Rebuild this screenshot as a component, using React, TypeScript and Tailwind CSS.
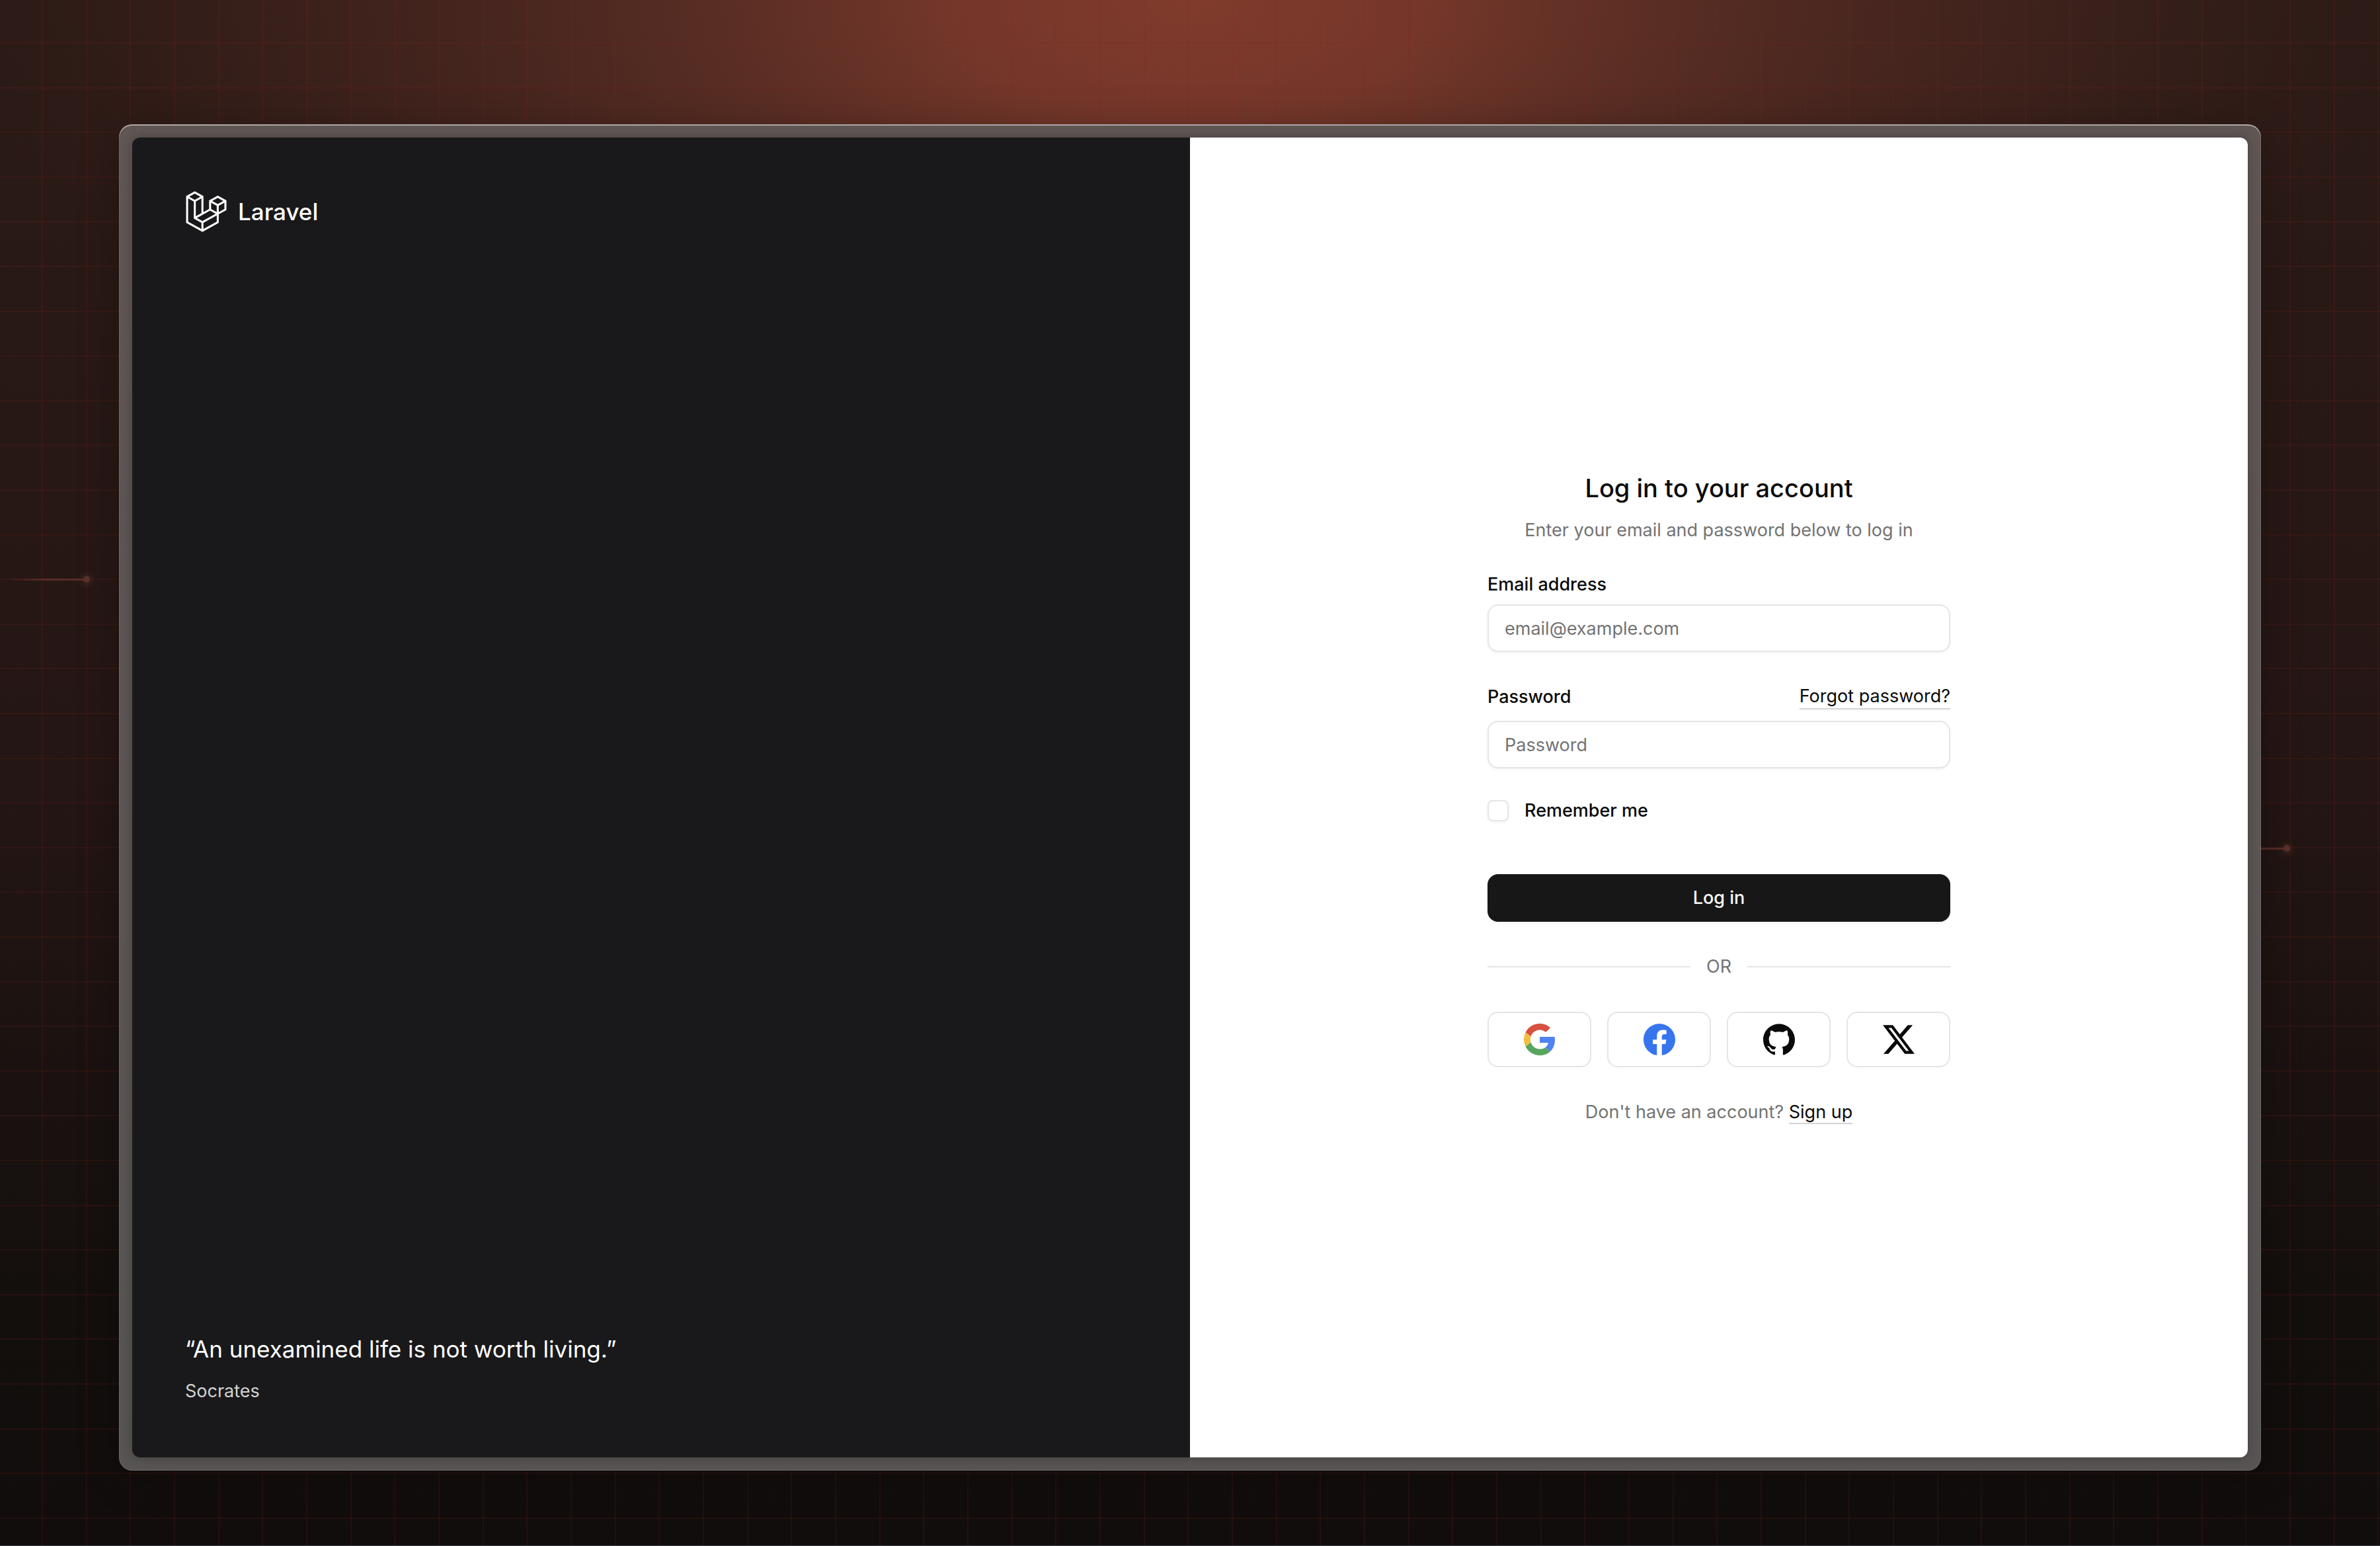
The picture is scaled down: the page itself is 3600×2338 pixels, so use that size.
import React from "react";

function LaravelLogo() {
  return (
    <svg viewBox="0 0 40 42" className="size-16 fill-current" aria-hidden="true">
      <path
        fillRule="evenodd"
        clipRule="evenodd"
        d="M17.2 5.63325L8.6 0.855469L0 5.63325V32.1434L16.2 41.1434L32.4 32.1434V23.699L40 19.4767V9.85547L31.4 5.07769L22.8 9.85547V18.2999L17.2 21.411V5.63325ZM38 18.2999L32.4 21.411V15.2545L38 12.1434V18.2999ZM36.9409 10.4439L31.4 13.5221L25.8591 10.4439L31.4 7.36561L36.9409 10.4439ZM24.8 18.2999V12.1434L30.4 15.2545V21.411L24.8 18.2999ZM23.8 20.0323L29.3409 23.1105L16.2 30.411L10.6591 27.3328L23.8 20.0323ZM7.6 27.9212L15.2 32.1434V38.2999L2 30.9666V7.92116L7.6 11.0323V27.9212ZM8.6 9.29991L3.05913 6.22165L8.6 3.14339L14.1409 6.22165L8.6 9.29991ZM30.4 24.8101L17.2 32.1434V38.2999L30.4 30.9666V24.8101ZM9.6 11.0323L15.2 7.92117V22.5221L9.6 25.6333V11.0323Z"
      />
    </svg>
  );
}

function GoogleIcon() {
  return (
    <svg viewBox="0 0 48 48" className="size-12" aria-hidden="true">
      <path fill="#D85140" d="M24 9.5c3.54 0 6.71 1.22 9.21 3.6l6.85-6.85C35.9 2.38 30.47 0 24 0 14.62 0 6.51 5.38 2.56 13.22l7.98 6.19C12.43 13.72 17.74 9.5 24 9.5z" />
      <path fill="#5083ED" d="M46.98 24.55c0-1.57-.15-3.09-.38-4.55H24v9.02h12.94c-.58 2.96-2.26 5.48-4.78 7.18l7.73 6c4.51-4.18 7.09-10.36 7.09-17.65z" />
      <path fill="#F1BE42" d="M10.53 28.59c-.48-1.45-.76-2.99-.76-4.59s.27-3.14.76-4.59l-7.98-6.19C.92 16.46 0 20.12 0 24c0 3.88.92 7.54 2.56 10.78l7.97-6.19z" />
      <path fill="#58A55D" d="M24 48c6.48 0 11.93-2.13 15.89-5.81l-7.73-6c-2.15 1.45-4.92 2.3-8.16 2.3-6.26 0-11.57-4.22-13.47-9.91l-7.98 6.19C6.51 42.62 14.62 48 24 48z" />
    </svg>
  );
}

function FacebookIcon() {
  return (
    <svg viewBox="0 0 24 24" className="size-12" aria-hidden="true">
      <path
        fill="#3775EE"
        d="M24 12.073c0-6.627-5.373-12-12-12s-12 5.373-12 12c0 5.99 4.388 10.954 10.125 11.854v-8.385H7.078v-3.47h3.047V9.43c0-3.007 1.792-4.669 4.533-4.669 1.312 0 2.686.235 2.686.235v2.953H15.83c-1.491 0-1.956.925-1.956 1.874v2.25h3.328l-.532 3.47h-2.796v8.385C19.612 23.027 24 18.062 24 12.073z"
      />
    </svg>
  );
}

function GitHubIcon() {
  return (
    <svg viewBox="0 0 24 24" className="size-12 fill-current" aria-hidden="true">
      <path d="M12 .297c-6.63 0-12 5.373-12 12 0 5.303 3.438 9.8 8.205 11.385.6.113.82-.258.82-.577 0-.285-.01-1.04-.015-2.04-3.338.724-4.042-1.61-4.042-1.61C4.422 18.07 3.633 17.7 3.633 17.7c-1.087-.744.084-.729.084-.729 1.205.084 1.838 1.236 1.838 1.236 1.07 1.835 2.809 1.305 3.495.998.108-.776.417-1.305.76-1.605-2.665-.3-5.466-1.332-5.466-5.93 0-1.31.465-2.38 1.235-3.22-.135-.303-.54-1.523.105-3.176 0 0 1.005-.322 3.3 1.23.96-.267 1.98-.399 3-.405 1.02.006 2.04.138 3 .405 2.28-1.552 3.285-1.23 3.285-1.23.645 1.653.24 2.873.12 3.176.765.84 1.23 1.91 1.23 3.22 0 4.61-2.805 5.625-5.475 5.92.42.36.81 1.096.81 2.22 0 1.606-.015 2.896-.015 3.286 0 .315.21.69.825.57C20.565 22.092 24 17.592 24 12.297c0-6.627-5.373-12-12-12" />
    </svg>
  );
}

function XIcon() {
  return (
    <svg viewBox="0 0 24 24" className="size-12 fill-current" aria-hidden="true">
      <path d="M18.901 1.153h3.68l-8.04 9.19L24 22.846h-7.406l-5.8-7.584-6.638 7.584H.474l8.6-9.83L0 1.154h7.594l5.243 6.932ZM17.61 20.644h2.039L6.486 3.24H4.298Z" />
    </svg>
  );
}

const providers = [
  { name: "Google", Icon: GoogleIcon },
  { name: "Facebook", Icon: FacebookIcon },
  { name: "GitHub", Icon: GitHubIcon },
  { name: "X", Icon: XIcon },
];

function Backdrop() {
  const columns = Array.from({ length: 54 }, (_, i) => 64 + Math.round((i * 200) / 3));
  const rows = Array.from({ length: 34 }, (_, i) => 65 + Math.round(i * 67.6));
  return (
    <svg
      className="absolute inset-0 -z-10 size-full"
      viewBox="0 0 3600 2338"
      preserveAspectRatio="none"
      aria-hidden="true"
    >
      <defs>
        <linearGradient id="base" x1="0" y1="0" x2="0" y2="1">
          <stop offset="0" stopColor="#2c1b17" />
          <stop offset="0.5" stopColor="#241614" />
          <stop offset="0.85" stopColor="#130f0d" />
          <stop offset="1" stopColor="#110d0c" />
        </linearGradient>
        <radialGradient id="glow" cx="0.5" cy="0" r="0.5" gradientTransform="scale(1 0.8)">
          <stop offset="0" stopColor="#803b2c" />
          <stop offset="0.2" stopColor="#78382b" stopOpacity="0.95" />
          <stop offset="0.4" stopColor="#6c3529" stopOpacity="0.7" />
          <stop offset="0.7" stopColor="#5a2d24" stopOpacity="0.4" />
          <stop offset="1" stopColor="#4a251e" stopOpacity="0" />
        </radialGradient>
        <linearGradient id="trail-left" gradientUnits="userSpaceOnUse" x1="10" y1="0" x2="131" y2="0">
          <stop offset="0" stopColor="#5a2c27" stopOpacity="0" />
          <stop offset="0.5" stopColor="#5a2c27" />
          <stop offset="1" stopColor="#552c28" />
        </linearGradient>
        <radialGradient id="halo">
          <stop offset="0" stopColor="#5a322b" stopOpacity="0.4" />
          <stop offset="1" stopColor="#5a322b" stopOpacity="0" />
        </radialGradient>
      </defs>
      <rect width="3600" height="2338" fill="url(#base)" />
      <rect width="3600" height="2338" fill="url(#glow)" />
      <g stroke="#8a1f18" strokeOpacity="0.15" strokeWidth="2">
        {columns.map((x) => (
          <line key={x} x1={x} x2={x} y1="0" y2="2338" />
        ))}
        {rows.map((y) => (
          <line key={y} x1="0" x2="3600" y1={y} y2={y} />
        ))}
      </g>
      <rect x="10" y="875" width="121" height="3" fill="url(#trail-left)" />
      <circle cx="131" cy="877" r="14" fill="url(#halo)" />
      <circle cx="131" cy="876" r="5" fill="#5a302c" />
      <rect x="3340" y="1282" width="119" height="3" fill="#522a26" />
      <circle cx="3459" cy="1284" r="14" fill="url(#halo)" />
      <circle cx="3459" cy="1283" r="5" fill="#5a302c" />
      <rect y="2337" width="3600" height="1" fill="#454150" />
    </svg>
  );
}

const field =
  "h-[72px] w-full rounded-2xl border-2 border-neutral-200 bg-white px-6 text-[27px] shadow-[0_2px_4px_rgba(0,0,0,0.05)] outline-none placeholder:text-[#737373]";
const link = "border-b-2 border-neutral-300 text-[#0a0a0a]";

function LoginForm() {
  return (
    <form className="flex w-[700px] flex-col gap-12" onSubmit={(e) => e.preventDefault()}>
      <header className="flex flex-col items-center gap-4 text-center">
        <h1 className="text-[38px] leading-14 font-medium">Log in to your account</h1>
        <p className="leading-10 text-[#737373]">Enter your email and password below to log in</p>
      </header>

      <div className="flex flex-col gap-4">
        <label htmlFor="email" className="leading-7 font-medium">
          Email address
        </label>
        <input id="email" type="email" placeholder="email@example.com" className={field} />
      </div>

      <div className="flex flex-col gap-4">
        <div className="flex items-center justify-between leading-10">
          <label htmlFor="password" className="font-medium">
            Password
          </label>
          <a href="#forgot" className={"leading-9 " + link}>
            Forgot password?
          </a>
        </div>
        <input id="password" type="password" placeholder="Password" className={field} />
      </div>

      <div className="flex items-center gap-6">
        <input
          id="remember"
          type="checkbox"
          className="size-8 appearance-none rounded-lg border-2 border-neutral-200 bg-white shadow-[0_2px_4px_rgba(0,0,0,0.05)] checked:bg-neutral-900"
        />
        <label htmlFor="remember" className="leading-8 font-medium">
          Remember me
        </label>
      </div>

      <button
        type="submit"
        className="mt-8 h-[72px] rounded-2xl bg-[#171717] font-medium text-neutral-50 shadow-[0_2px_4px_rgba(0,0,0,0.05)]"
      >
        Log in
      </button>

      <div className="flex items-center gap-6 leading-10 text-[#737373]">
        <span className="h-0.5 flex-1 bg-neutral-200" />
        OR
        <span className="h-0.5 flex-1 bg-neutral-200" />
      </div>

      <div className="grid grid-cols-4 gap-6">
        {providers.map(({ name, Icon }) => (
          <button
            key={name}
            type="button"
            aria-label={"Log in with " + name}
            className="flex h-[84px] items-center justify-center rounded-2xl border-2 border-neutral-200 bg-white"
          >
            <Icon />
          </button>
        ))}
      </div>

      <p className="text-center leading-10 text-[#737373]">
        Don't have an account?{" "}
        <a href="#signup" className={link}>
          Sign up
        </a>
      </p>
    </form>
  );
}

export default function App() {
  return (
    <div className="relative isolate flex min-h-screen flex-col overflow-hidden px-[180px] pt-[188px] pb-[114px] font-['Inter','Liberation_Sans',sans-serif] text-[27px] text-[#0a0a0a]">
      <Backdrop />
      <div className="flex flex-1 rounded-[20px] bg-linear-to-b from-[#605654] to-[#575453] p-5 shadow-[0_8px_60px_rgba(0,0,0,0.25),inset_0_2px_0_rgba(255,255,255,0.45),inset_0_0_0_1px_rgba(255,255,255,0.12)]">
        <main className="grid flex-1 grid-cols-2 overflow-hidden rounded-xl shadow-[0_0_16px_rgba(0,0,0,0.25)]">
          <section className="flex flex-col justify-between bg-[#19191b] p-20 text-white">
            <a href="#home" className="flex items-center gap-4 text-[35px] leading-14 font-medium">
              <LaravelLogo />
              Laravel
            </a>
            <blockquote className="flex flex-col gap-4">
              <p className="text-[35px] leading-14">&ldquo;An unexamined life is not worth living.&rdquo;</p>
              <footer className="leading-10 text-neutral-300">Socrates</footer>
            </blockquote>
          </section>
          <section className="flex items-center justify-center bg-white p-20">
            <LoginForm />
          </section>
        </main>
      </div>
    </div>
  );
}
